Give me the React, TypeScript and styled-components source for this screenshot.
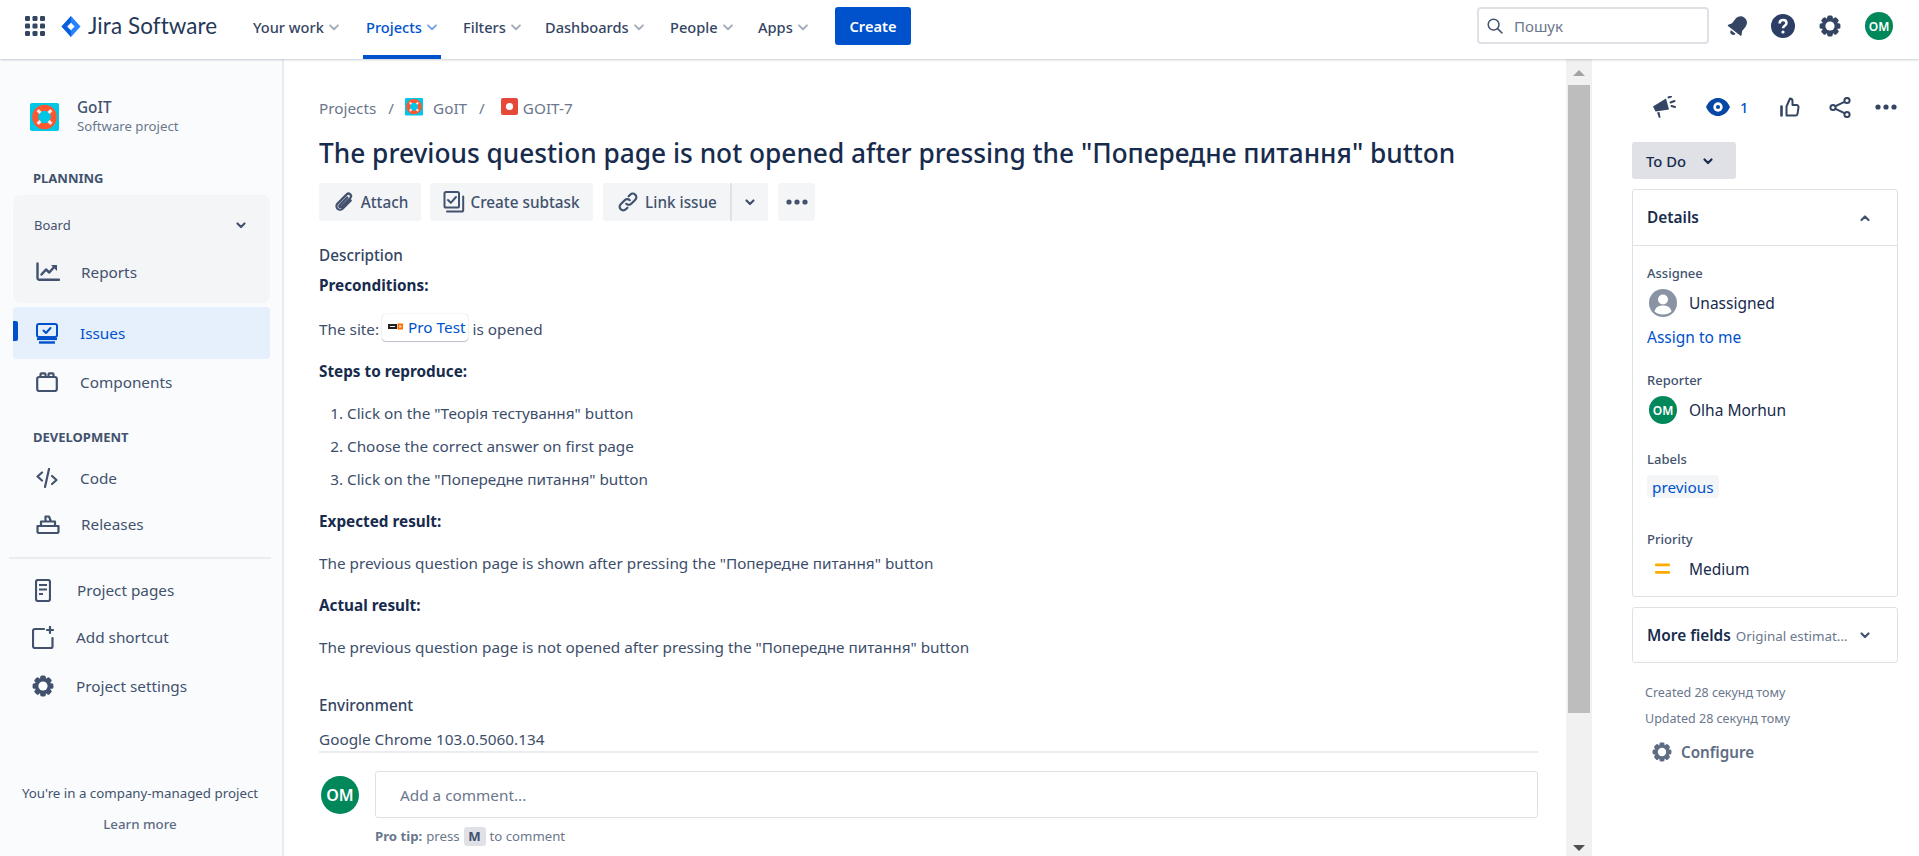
import React from "react";
import styled, { createGlobalStyle } from "styled-components";

const Global = createGlobalStyle`
  html, body { margin: 0; padding: 0; height: 100%; overflow: hidden; background: #fff; }
  body { font-family: "Noto Sans", "Open Sans", "Liberation Sans", sans-serif; color: #172b4d; font-size: 15.3px; }
  * { box-sizing: border-box; }
`;

const Page = styled.div`display: flex; flex-direction: column; height: 856px; width: 1919px; overflow: hidden;`;

/* ---------- top bar ---------- */
const TopBar = styled.header`
  height: 59px; flex: none; display: flex; align-items: center; padding: 0 26px 7px 25px; background: #fff;
  box-shadow: 0 1px 2px rgba(9, 30, 66, .22); position: relative; z-index: 2;
`;
const Logo = styled.div`display: flex; align-items: center; margin-left: 16px; gap: 7px; width: 157px; flex: none;`;
const LogoText = styled.span`font: 400 22.4px/1 Lato, sans-serif; color: #253858; white-space: nowrap; letter-spacing: .1px;`;
const NavList = styled.nav`display: flex; height: 59px; margin: 0 0 -7px 32px;`;
const NavItem = styled.div<{ $active?: boolean; $w: number; $after?: number }>`
  width: ${p => p.$w}px; margin-right: ${p => p.$after ?? 0}px; height: 59px; display: flex; align-items: center; gap: 1px; padding: 0 0 1px 3px;
  font-size: 14.6px; font-weight: 500; white-space: nowrap;
  color: ${p => (p.$active ? "#0052cc" : "#344563")};
  border-bottom: 4px solid ${p => (p.$active ? "#0052cc" : "transparent")};
`;
const CreateButton = styled.button`
  width: 76px; height: 38px; border: 0; border-radius: 3px; background: #0052cc; color: #fff;
  font: 600 14.6px "Noto Sans", sans-serif; padding: 0;
`;
const Spacer = styled.div`flex: 1;`;
const SearchBox = styled.div`
  width: 232px; height: 37px; border: 2px solid #dfe1e6; border-radius: 4px; display: flex; align-items: center;
  padding-left: 8px; gap: 11px; color: #6b778c; font-size: 15px; margin-top: -1px;
`;
const TopIcons = styled.div`display: flex; align-items: center; margin-left: 17px;`;
const TopIconSlot = styled.div<{ $w: number }>`width: ${p => p.$w}px; display: flex; justify-content: flex-start; align-items: center;`;
const Avatar = styled.div<{ $size: number; $font: number }>`
  width: ${p => p.$size}px; height: ${p => p.$size}px; border-radius: 50%; background: #00875a; color: #fff; flex: none;
  display: flex; align-items: center; justify-content: center; font-size: ${p => p.$font}px; font-weight: 600;
`;

/* ---------- body ---------- */
const Body = styled.div`flex: 1; display: flex; min-height: 0;`;

const Sidebar = styled.aside`
  width: 284px; flex: none; background: #fafbfc; border-right: 2px solid #ebecf0; display: flex; flex-direction: column;
  padding: 43px 0 0 0;
`;
const ProjectHead = styled.div`display: flex; align-items: center; padding-left: 30px; gap: 18px; height: 30px;`;
const ProjectText = styled.div`display: flex; flex-direction: column; margin-top: -2px;`;
const ProjectName = styled.div`font-size: 15.3px; font-weight: 500; color: #42526e; line-height: 20px;`;
const ProjectSub = styled.div`font-size: 13.2px; color: #6b778c; line-height: 19px;`;
const SectionTitle = styled.div<{ $top: number }>`
  margin: ${p => p.$top}px 0 0 33px; font-size: 13px; font-weight: 700; color: #42526e; line-height: 20px;
`;
const BoardGroup = styled.div`
  margin: 7px 12px 4px 13px; height: 108px; border-radius: 8px; background: #f4f5f7; display: flex; flex-direction: column;
`;
const BoardHead = styled.div`
  height: 60px; padding: 0 21px 0 21px; display: flex; align-items: center; justify-content: space-between;
  font-size: 13px; color: #42526e;
`;
const SideItem = styled.div<{ $active?: boolean; $h: number; $gap: number; $icon: number; $mt?: number }>`
  position: relative; height: ${p => p.$h}px; margin: ${p => p.$mt ?? 0}px 12px 0 13px; display: flex; align-items: center;
  padding-left: ${p => p.$icon}px; gap: ${p => p.$gap}px; font-size: 15.3px; border-radius: 4px;
  color: ${p => (p.$active ? "#0052cc" : "#42526e")};
  background: ${p => (p.$active ? "#e6effc" : "transparent")};
`;
const ActiveBar = styled.span`position: absolute; left: 0; top: 14px; width: 5px; height: 20px; background: #0052cc; border-radius: 0 2px 2px 0;`;
const SideDivider = styled.div`height: 2px; background: #ebecf0; margin: 10px 11px 0 9px;`;
const SideFooter = styled.div`
  margin-top: auto; padding-bottom: 22px; text-align: center; font-size: 13.3px; color: #42526e; padding-right: 2px;
`;
const SideFooterLink = styled.div`margin-top: 11px; font-weight: 500; color: #5e6c84; line-height: 20px;`;
const SideFooterText = styled.div`line-height: 20px; white-space: nowrap;`;

const Main = styled.main`flex: 1; min-width: 0; display: flex; flex-direction: column; padding: 0 28px 0 35px; overflow: hidden;`;
const Scroller = styled.div`flex: 1; min-height: 0; overflow: hidden; padding-top: 37px;`;
const Crumbs = styled.div`display: flex; align-items: center; height: 24px; color: #6b778c; font-size: 15.3px; white-space: nowrap;`;
const CrumbSep = styled.span`margin: 0 11px 0 12px; color: #6b778c;`;
const CrumbIcon = styled.span<{ $gap: number; $before?: number }>`display: flex; margin-right: ${p => p.$gap}px; margin-left: ${p => p.$before ?? 0}px; margin-top: -3px;`;
const Title = styled.h1`margin: 13px 0 0; font-size: 26.25px; line-height: 40px; font-weight: 500; color: #172b4d; white-space: nowrap;`;
const Toolbar = styled.div`display: flex; margin-top: 10px; height: 38px;`;
const ToolButton = styled.div<{ $w: number; $ml?: number }>`
  width: ${p => p.$w}px; margin-left: ${p => p.$ml ?? 0}px; height: 38px; background: #f4f5f7; border-radius: 3px;
  display: flex; align-items: center; justify-content: center; gap: 5px; color: #42526e; font-size: 15.3px; font-weight: 500; white-space: nowrap;
`;
const SplitDivider = styled.span`width: 2px; background: #dfe1e6; height: 38px;`;
const FieldLabel = styled.div<{ $top: number }>`margin-top: ${p => p.$top}px; font-size: 15.3px; font-weight: 500; color: #344563; line-height: 20px;`;
const Para = styled.div<{ $top: number; $bold?: boolean }>`
  margin-top: ${p => p.$top}px; line-height: 22px; font-size: 15.3px; white-space: nowrap;
  color: ${p => (p.$bold ? "#172b4d" : "#3d4e6b")}; font-weight: ${p => (p.$bold ? 700 : 400)};
  display: flex; align-items: center;
`;
const LinkChip = styled.span`
  display: inline-flex; align-items: center; height: 27px; margin: -5px 5px -1px 3px; padding: 0 2px 0 5px; gap: 4px; border-radius: 4px; background: #fff;
  box-shadow: 0 1px 1px rgba(9,30,66,.25), 0 0 1px rgba(9,30,66,.31); color: #0052cc;
`;
const Steps = styled.ol`margin: 20px 0 0; padding: 0 0 0 28px; font-size: 15.3px; color: #3d4e6b; line-height: 22px;`;
const Step = styled.li`margin-bottom: 11px;`;

const CommentBar = styled.div`flex: none; height: 105px; border-top: 2px solid #ebecf0;`;
const CommentRow = styled.div`display: flex; margin-top: 18px; padding-left: 2px; gap: 16px; height: 47px;`;
const CommentInput = styled.div`
  flex: 1; border: 1px solid #dfe1e6; border-radius: 3px; display: flex; align-items: center; padding: 0 0 0 24px; color: #6b778c; font-size: 15.3px;
`;
const CommentAvatarWrap = styled.div`padding-top: 5px;`;
const ProTip = styled.div`margin: 0 0 0 56px; height: 36px; display: flex; align-items: center; font-size: 13.2px; color: #6b778c; gap: 4px;`;
const Kbd = styled.span`
  display: inline-flex; align-items: center; justify-content: center; width: 22px; height: 19px; background: #dfe1e6; border-radius: 3px; font-weight: 700; color: #42526e; font-size: 13.2px;
`;
const ProTipBold = styled.b`font-weight: 700;`;

const ScrollTrack = styled.div`
  width: 26px; flex: none; background: #f1f1f1; display: flex; flex-direction: column; align-items: center; position: relative;
`;
const ScrollArrow = styled.span<{ $down?: boolean }>`
  width: 0; height: 0; border-left: 6px solid transparent; border-right: 6px solid transparent; flex: none;
  ${p => (p.$down ? "border-top: 6px solid #505050; margin-top: auto; margin-bottom: 5px;" : "border-bottom: 6px solid #a3a3a3; margin-top: 11px;")}
`;
const ScrollThumb = styled.div`width: 22px; height: 628px; background: #bdbdbd; margin-top: 9px; flex: none;`;

const Right = styled.aside`width: 327px; flex: none; padding: 34px 21px 0 40px; display: flex; flex-direction: column;`;
const ActionRow = styled.div`display: flex; align-items: center; height: 28px; position: relative;`;
const ActionSlot = styled.div<{ $w: number }>`width: ${p => p.$w}px; flex: none; display: flex; align-items: center; gap: 10px; color: #0052cc; font-size: 14.5px; font-weight: 500;`;
const StatusButton = styled.div`
  margin-top: 21px; width: 104px; height: 37px; background: #dfe1e6; border-radius: 3px; display: flex; align-items: center; padding-left: 14px; gap: 14px;
  color: #172b4d; font-size: 14.8px; font-weight: 500;
`;
const Card = styled.section<{ $top: number }>`margin-top: ${p => p.$top}px; border: 1px solid #dfe1e6; border-radius: 3px; background: #fff;`;
const CardHead = styled.div<{ $line?: boolean }>`
  height: ${p => (p.$line ? 56 : 54)}px; padding: 0 24px 0 14px; display: flex; align-items: center; justify-content: space-between;
  ${p => (p.$line ? "border-bottom: 1px solid #dfe1e6;" : "")}
`;
const CardTitle = styled.div`font-size: 15.4px; font-weight: 600; color: #172b4d; white-space: nowrap;`;
const CardHint = styled.span`font-size: 13.4px; font-weight: 400; color: #6b778c; margin-left: 5px;`;
const CardBody = styled.div`padding: 17px 14px 0; height: 350px;`;
const DLabel = styled.div<{ $top?: number }>`margin-top: ${p => p.$top ?? 0}px; font-size: 13px; font-weight: 500; color: #42526e; line-height: 20px;`;
const DValue = styled.div<{ $top?: number }>`
  margin-top: ${p => p.$top ?? 0}px; display: flex; align-items: center; height: 28px; padding-left: 2px; gap: 12px; font-size: 15.5px; color: #172b4d;
`;
const PriorityIcon = styled.span`width: 28px; display: flex; justify-content: center;`;
const AssignLink = styled.div`margin-top: 10px; font-size: 15.5px; line-height: 20px; color: #0052cc;`;
const LabelChip = styled.div`
  margin-top: 6px; display: flex; width: fit-content; height: 23px; align-items: center; padding: 0 5px; background: #f4f5f7; border-radius: 3px; color: #0052cc; font-size: 15.3px;
`;
const Meta = styled.div<{ $top: number }>`margin: ${p => p.$top}px 0 0 13px; font-size: 12.5px; color: #6b778c; line-height: 20px; white-space: nowrap;`;
const Configure = styled.div`margin: 11px 0 0 20px; display: flex; align-items: center; gap: 9px; color: #5e6c84; font-size: 15.2px; font-weight: 600; height: 24px;`;

/* ---------- drawings ---------- */
type IP = { c?: string; s?: number };

const Chevron = ({ c = "#42526e", s = 16, w = 2.2, up }: IP & { w?: number; up?: boolean }) => (
  <svg width={s} height={s} viewBox="0 0 16 16" fill="none">
    <path d={up ? "M4.5 10 8 6.5 11.5 10" : "M4.5 6.5 8 10 11.5 6.5"} stroke={c} strokeWidth={w} strokeLinecap="round" strokeLinejoin="round" />
  </svg>
);
const NavChevron = ({ c = "#a5adba" }: IP) => <Chevron c={c} s={18} w={1.7} />;

const AppGrid = () => (
  <svg width="20" height="20" viewBox="0 0 20 20" fill="#344563">
    {[0, 7.5, 15].flatMap(y => [0, 7.5, 15].map(x => <rect key={`${x}-${y}`} x={x} y={y} width="5" height="5" rx="1.2" />))}
  </svg>
);
const JiraMark = () => (
  <svg width="20" height="21" viewBox="0 0 20 21">
    <path d="M10 0 19.5 10.5 10 21 .5 10.5Z" fill="#2684ff" />
    <path d="M10 0 .5 10.5 10 21V15L5.5 10.5 10 6Z" fill="#0052cc" opacity=".75" />
    <path d="M10 6.8 13.6 10.5 10 14.2 6.4 10.5Z" fill="#fff" />
  </svg>
);
const SearchIcon = () => (
  <svg width="16" height="16" viewBox="0 0 16 16" fill="none" stroke="#42526e" strokeWidth="1.5"><circle cx="6.6" cy="6.6" r="5.4" /><path d="M10.6 10.6 15 15" strokeLinecap="round" /></svg>
);
const Bell = () => (
  <svg width="24" height="24" viewBox="0 0 20 20" fill="#344563">
    <g transform="rotate(38 10 10)"><path d="M10 1.2c-3.2 0-5.3 2.5-5.3 5.6v4.4L3 14.2v.9h14v-.9l-1.7-3V6.8c0-3.1-2.1-5.6-5.3-5.6Z" /><path d="M7.6 16.4h4.8a2.4 2.4 0 0 1-4.8 0Z" /></g>
  </svg>
);
const Help = () => (
  <svg width="24" height="24" viewBox="0 0 24 24">
    <circle cx="12" cy="12" r="12" fill="#2c3e66" />
    <path d="M8.6 9.4c0-2 1.5-3.3 3.5-3.3s3.4 1.2 3.4 3c0 2.6-3.5 2.7-3.5 5.1" fill="none" stroke="#fff" strokeWidth="2.5" />
    <circle cx="12" cy="18" r="1.6" fill="#fff" />
  </svg>
);
const Gear = ({ c = "#344563", s = 22 }: IP) => (
  <svg width={s} height={s} viewBox="0 0 22 22">
    {[0, 45, 90, 135].map(a => <rect key={a} x="8.2" y="0.6" width="5.6" height="20.8" rx="1.6" fill={c} transform={`rotate(${a} 11 11)`} />)}
    <circle cx="11" cy="11" r="8" fill={c} />
    <circle cx="11" cy="11" r="4.6" fill="#fff" />
  </svg>
);
const Lifebuoy = ({ s = 29 }: IP) => (
  <svg width={s} height={s} viewBox="0 0 29 29">
    <rect width="29" height="28" rx="2" fill="#00c7e6" />
    <circle cx="14.5" cy="14" r="9.3" fill="none" stroke="#ff5630" strokeWidth="6" />
    <g stroke="#ffebe6" strokeWidth="3">
      <path d="M7.6 7.1 10.4 9.900M21.4 7.100 18.600 9.900M7.600 20.900 10.400 18.100M21.400 20.900 18.600 18.100" />
    </g>
  </svg>
);
const IssueRed = () => (
  <svg width="17" height="17" viewBox="0 0 17 17"><rect width="17" height="17" rx="2" fill="#e5493a" /><circle cx="8.5" cy="8.5" r="3.6" fill="#fff" /></svg>
);
const Clip = () => (
  <svg width="24" height="24" viewBox="0 0 24 24" fill="none" stroke="#42526e" strokeWidth="2.2" strokeLinecap="round">
    <path d="M18.8 10.5 10.6 18.7a3.6 3.6 0 0 1-5.1-5.1l9.2-9.2a2.5 2.5 0 0 1 3.6 3.5l-9 9a1.2 1.2 0 0 1-1.7-1.7l7.7-7.7" />
  </svg>
);
const Subtask = () => (
  <svg width="22" height="24" viewBox="0 0 22 24" fill="none" stroke="#42526e" strokeWidth="2">
    <rect x="1.5" y="2" width="14.5" height="15.5" rx="1.6" />
    <path d="M5 10l2.8 2.8L13 7" strokeLinecap="round" strokeLinejoin="round" />
    <path d="M4 21.5h14.6a1.6 1.6 0 0 0 1.6-1.6V6.5" strokeLinecap="round" />
  </svg>
);
const LinkIcon = () => (
  <svg width="24" height="24" viewBox="0 0 24 24" fill="none" stroke="#42526e" strokeWidth="2.2" strokeLinecap="round">
    <path d="M10.2 13.8a3.6 3.6 0 0 0 5.1 0l4-4a3.6 3.6 0 0 0-5.1-5.1l-1.6 1.6" />
    <path d="M13.8 10.2a3.6 3.6 0 0 0-5.1 0l-4 4a3.6 3.6 0 0 0 5.1 5.1l1.6-1.6" />
  </svg>
);
const Dots = ({ c = "#42526e" }: IP) => (
  <svg width="22" height="6" viewBox="0 0 22 6" fill={c}><circle cx="3" cy="3" r="2.6" /><circle cx="11" cy="3" r="2.6" /><circle cx="19" cy="3" r="2.6" /></svg>
);
const Reports = () => (
  <svg width="24" height="20" viewBox="0 0 24 20" fill="none" stroke="#42526e" strokeWidth="2.4" strokeLinecap="round" strokeLinejoin="round">
    <path d="M1.5 1.5V16a1.8 1.8 0 0 0 1.8 1.8H23" />
    <path d="M5.5 12.5 10 7.5l3.3 3 5.2-6" />
    <path d="M15 3h6v6z" fill="#42526e" stroke="none" />
  </svg>
);
const IssuesIcon = () => (
  <svg width="22" height="21" viewBox="0 0 22 21" fill="none" stroke="#0052cc" strokeWidth="2">
    <rect x="1" y="1" width="20" height="13" rx="2" />
    <path d="M7.5 7.5 10 10l4.500-5" strokeLinecap="round" strokeLinejoin="round" />
    <path d="M1 16h20" strokeWidth="2.2" />
    <path d="M3 19.500h16" strokeWidth="2.4" />
  </svg>
);
const Components = () => (
  <svg width="22" height="20" viewBox="0 0 22 20" fill="none" stroke="#42526e" strokeWidth="2.2">
    <rect x="1.200" y="5" width="19.600" height="14" rx="2" />
    <path d="M4.500 5V2.400a1 1 0 0 1 1-1h3a1 1 0 0 1 1 1V5M12.500 5V2.400a1 1 0 0 1 1-1h3a1 1 0 0 1 1 1V5" />
  </svg>
);
const CodeIcon = () => (
  <svg width="22" height="20" viewBox="0 0 22 20" fill="none" stroke="#42526e" strokeWidth="2.200" strokeLinecap="round" strokeLinejoin="round">
    <path d="M6 4.500 1.500 8.500 6 12.500M16 8 20.500 12 16 16M13 1 9 19" />
  </svg>
);
const Ship = () => (
  <svg width="24" height="19" viewBox="0 0 24 19" fill="none" stroke="#42526e" strokeWidth="2.200" strokeLinejoin="round">
    <path d="M1.500 11h21v5.500a1.500 1.500 0 0 1-1.500 1.500H3a1.500 1.500 0 0 1-1.500-1.500Z" />
    <path d="M5 11V6.500h14V11M9.500 6.500V1.500H13l2 5" />
  </svg>
);
const PageIcon = () => (
  <svg width="16" height="23" viewBox="0 0 16 23" fill="none" stroke="#42526e" strokeWidth="2.200">
    <rect x="1" y="1" width="14" height="21" rx="2" />
    <path d="M4 6h8M4 10.500h8M4 15h4" />
  </svg>
);
const AddShortcut = () => (
  <svg width="22" height="23" viewBox="0 0 22 23" fill="none" stroke="#42526e" strokeWidth="2.200" strokeLinecap="round">
    <path d="M12 3H3a2 2 0 0 0-2 2v15a2 2 0 0 0 2 2h16a1.500 1.500 0 0 0 1.500-1.500V12" />
    <path d="M18 1v6M15 4h6" />
  </svg>
);
const Megaphone = () => (
  <svg width="24" height="23" viewBox="0 0 24 23" fill="#344563">
    <path d="M1 10.500 14 2.500l3 11L3.500 15.500Z" />
    <path d="M5 16.500 7.500 16l1 5.500-1.500.5Z" />
    <path d="M16.500 1.500 19 0.500M18.500 6.500l4-1.500M19.500 10l3.500 1" stroke="#344563" strokeWidth="2" strokeLinecap="round" />
  </svg>
);
const Eye = () => (
  <svg width="24" height="20" viewBox="0 0 24 20">
    <path d="M0 10C3 3.500 7.500 1 12 1s9 2.500 12 9c-3 6.500-7.500 9-12 9S3 16.500 0 10Z" fill="#0747a6" />
    <circle cx="12" cy="10" r="4.700" fill="#fff" />
    <circle cx="12" cy="10" r="2.100" fill="#0747a6" />
  </svg>
);
const Thumb = () => (
  <svg width="20" height="20" viewBox="0 0 20 20" fill="none" stroke="#344563" strokeWidth="2" strokeLinejoin="round">
    <path d="M6.500 18.500V9.500L10 1.500c1.500 0 2.500 1 2.500 2.500v4h4a2 2 0 0 1 2 2.300l-1 6.500a2 2 0 0 1-2 1.700Z" />
    <path d="M1.500 9.500v9" strokeWidth="2.600" strokeLinecap="round" />
  </svg>
);
const Share = () => (
  <svg width="22" height="21" viewBox="0 0 22 21" fill="none" stroke="#344563" strokeWidth="2">
    <circle cx="4" cy="10.500" r="2.600" /><circle cx="18" cy="3.500" r="2.600" /><circle cx="18" cy="17.500" r="2.600" />
    <path d="M6.500 9.200 15.500 4.800M6.500 11.800l9 4.400" />
  </svg>
);
const Person = () => (
  <svg width="28" height="28" viewBox="0 0 28 28">
    <circle cx="14" cy="14" r="14" fill="#8993a4" />
    <circle cx="14" cy="10.500" r="5" fill="#fff" />
    <path d="M5.500 22.500c1-4.500 4.500-6 8.500-6s7.500 1.500 8.500 6c-2 2-5 3-8.500 3s-6.500-1-8.500-3Z" fill="#fff" />
  </svg>
);
const MediumIcon = () => (
  <svg width="16" height="12" viewBox="0 0 16 12" fill="#ffab00"><rect y="0.500" width="15" height="2.800" rx="1" /><rect y="8" width="15" height="2.800" rx="1" /></svg>
);
const SiteFavicon = () => (
  <svg width="17" height="8" viewBox="0 0 15 8">
    <rect y="1" width="9" height="5" fill="#222" /><rect x="2" y="3" width="5" height="1" fill="#eee" />
    <rect x="9.500" y="0.500" width="5.500" height="6" fill="#ff6c00" /><rect x="11" y="2.500" width="2.500" height="2" fill="#ffd9b8" />
  </svg>
);

const navItems: { t: string; w: number; after?: number }[] = [
  { t: "Your work", w: 113 },
  { t: "Projects", w: 78, after: 19 },
  { t: "Filters", w: 82 },
  { t: "Dashboards", w: 125 },
  { t: "People", w: 88 },
  { t: "Apps", w: 80 },
];

export default function App() {
  return (
    <Page>
      <Global />
      <TopBar>
        <AppGrid />
        <Logo><JiraMark /><LogoText>Jira Software</LogoText></Logo>
        <NavList>
          {navItems.map(({ t, w, after }) => (
            <NavItem key={t} $w={w} $after={after} $active={t === "Projects"}>
              {t}<NavChevron c={t === "Projects" ? "#7aa5e6" : "#a5adba"} />
            </NavItem>
          ))}
        </NavList>
        <CreateButton>Create</CreateButton>
        <Spacer />
        <SearchBox><SearchIcon />Пошук</SearchBox>
        <TopIcons>
          <TopIconSlot $w={45}><Bell /></TopIconSlot>
          <TopIconSlot $w={48}><Help /></TopIconSlot>
          <TopIconSlot $w={46}><Gear /></TopIconSlot>
          <Avatar $size={28} $font={12}>OM</Avatar>
        </TopIcons>
      </TopBar>
      <Body>
        <Sidebar>
          <ProjectHead>
            <Lifebuoy />
            <ProjectText>
              <ProjectName>GoIT</ProjectName>
              <ProjectSub>Software project</ProjectSub>
            </ProjectText>
          </ProjectHead>
          <SectionTitle $top={36}>PLANNING</SectionTitle>
          <BoardGroup>
            <BoardHead>Board<Chevron s={16} c="#42526e" /></BoardHead>
            <SideItem $h={34} $gap={21} $icon={10}><Reports />Reports</SideItem>
          </BoardGroup>
          <SideItem $active $h={52} $gap={22} $icon={23}><ActiveBar /><IssuesIcon />Issues</SideItem>
          <SideItem $h={46} $gap={22} $icon={23}><Components />Components</SideItem>
          <SectionTitle $top={22}>DEVELOPMENT</SectionTitle>
          <SideItem $h={46} $gap={22} $icon={23} $mt={8}><CodeIcon />Code</SideItem>
          <SideItem $h={46} $gap={21} $icon={23}><Ship />Releases</SideItem>
          <SideDivider />
          <SideItem $h={46} $gap={26} $icon={22} $mt={8}><PageIcon />Project pages</SideItem>
          <SideItem $h={48} $gap={22} $icon={19}><AddShortcut />Add shortcut</SideItem>
          <SideItem $h={49} $gap={22} $icon={19}><Gear c="#42526e" />Project settings</SideItem>
          <SideFooter>
            <SideFooterText>You're in a company-managed project</SideFooterText>
            <SideFooterLink>Learn more</SideFooterLink>
          </SideFooter>
        </Sidebar>
        <Main>
          <Scroller>
            <Crumbs>
              Projects<CrumbSep>/</CrumbSep>
              <CrumbIcon $gap={10}><Lifebuoy s={18} /></CrumbIcon>GoIT<CrumbSep>/</CrumbSep>
              <CrumbIcon $gap={5} $before={5}><IssueRed /></CrumbIcon>GOIT-7
            </Crumbs>
            <Title>The previous question page is not opened after pressing the "Попередне питання" button</Title>
            <Toolbar>
              <ToolButton $w={102}><Clip />Attach</ToolButton>
              <ToolButton $w={163} $ml={9}><Subtask />Create subtask</ToolButton>
              <ToolButton $w={127} $ml={10}><LinkIcon />Link issue</ToolButton>
              <SplitDivider />
              <ToolButton $w={36}><Chevron s={16} /></ToolButton>
              <ToolButton $w={37} $ml={10}><Dots /></ToolButton>
            </Toolbar>
            <FieldLabel $top={24}>Description</FieldLabel>
            <Para $top={9} $bold>Preconditions:</Para>
            <Para $top={22}>The site:<LinkChip><SiteFavicon />Pro Test</LinkChip>is opened</Para>
            <Para $top={20} $bold>Steps to reproduce:</Para>
            <Steps>
              <Step>Click on the "Теорія тестування" button</Step>
              <Step>Choose the correct answer on first page</Step>
              <Step>Click on the "Попередне питання" button</Step>
            </Steps>
            <Para $top={20} $bold>Expected result:</Para>
            <Para $top={20}>The previous question page is shown after pressing the "Попередне питання" button</Para>
            <Para $top={20} $bold>Actual result:</Para>
            <Para $top={20}>The previous question page is not opened after pressing the "Попередне питання" button</Para>
            <FieldLabel $top={37}>Environment</FieldLabel>
            <Para $top={13}>Google Chrome 103.0.5060.134</Para>
          </Scroller>
          <CommentBar>
            <CommentRow>
              <CommentAvatarWrap><Avatar $size={38} $font={16}>OM</Avatar></CommentAvatarWrap>
              <CommentInput>Add a comment...</CommentInput>
            </CommentRow>
            <ProTip><ProTipBold>Pro tip:</ProTipBold> press <Kbd>M</Kbd> to comment</ProTip>
          </CommentBar>
        </Main>
        <ScrollTrack>
          <ScrollArrow />
          <ScrollThumb />
          <ScrollArrow $down />
        </ScrollTrack>
        <Right>
          <ActionRow>
            <ActionSlot $w={20} />
            <ActionSlot $w={54}><Megaphone /></ActionSlot>
            <ActionSlot $w={74}><Eye />1</ActionSlot>
            <ActionSlot $w={49}><Thumb /></ActionSlot>
            <ActionSlot $w={46}><Share /></ActionSlot>
            <ActionSlot $w={22}><Dots c="#344563" /></ActionSlot>
          </ActionRow>
          <StatusButton>To Do<Chevron s={16} c="#172b4d" /></StatusButton>
          <Card $top={10}>
            <CardHead $line><CardTitle>Details</CardTitle><Chevron up s={16} c="#42526e" /></CardHead>
            <CardBody>
              <DLabel>Assignee</DLabel>
              <DValue $top={6}><Person />Unassigned</DValue>
              <AssignLink>Assign to me</AssignLink>
              <DLabel $top={23}>Reporter</DLabel>
              <DValue $top={6}><Avatar $size={28} $font={12}>OM</Avatar>Olha Morhun</DValue>
              <DLabel $top={25}>Labels</DLabel>
              <LabelChip>previous</LabelChip>
              <DLabel $top={31}>Priority</DLabel>
              <DValue $top={6}><PriorityIcon><MediumIcon /></PriorityIcon>Medium</DValue>
            </CardBody>
          </Card>
          <Card $top={10}>
            <CardHead>
              <CardTitle>More fields<CardHint>Original estimat...</CardHint></CardTitle>
              <Chevron s={16} c="#42526e" />
            </CardHead>
          </Card>
          <Meta $top={20}>Created 28 секунд тому</Meta>
          <Meta $top={6}>Updated 28 секунд тому</Meta>
          <Configure><Gear c="#5e6c84" s={20} />Configure</Configure>
        </Right>
      </Body>
    </Page>
  );
}
